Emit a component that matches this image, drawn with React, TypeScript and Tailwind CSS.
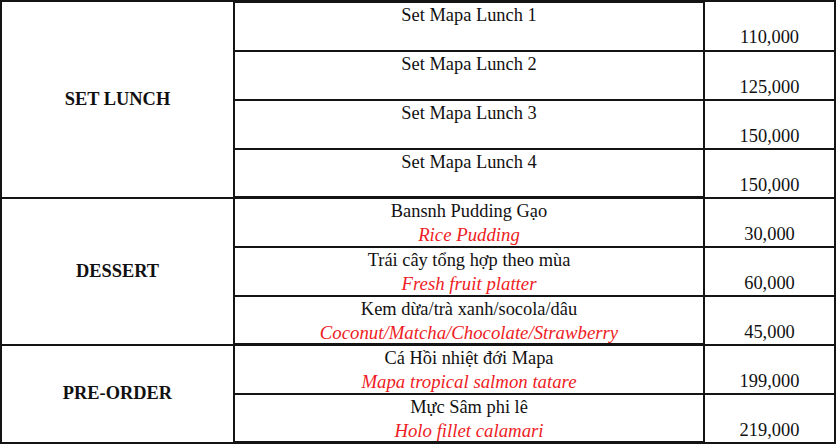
type Item = {
  name: string;
  en?: string;
  price: string;
};

type Section = {
  title: string;
  items: Item[];
};

const sections: Section[] = [
  {
    title: 'SET LUNCH',
    items: [
      { name: 'Set Mapa Lunch 1', price: '110,000' },
      { name: 'Set Mapa Lunch 2', price: '125,000' },
      { name: 'Set Mapa Lunch 3', price: '150,000' },
      { name: 'Set Mapa Lunch 4', price: '150,000' },
    ],
  },
  {
    title: 'DESSERT',
    items: [
      { name: 'Bansnh Pudding Gạo', en: 'Rice Pudding', price: '30,000' },
      { name: 'Trái cây tổng hợp theo mùa', en: 'Fresh fruit platter', price: '60,000' },
      {
        name: 'Kem dừa/trà xanh/socola/dâu',
        en: 'Coconut/Matcha/Chocolate/Strawberry',
        price: '45,000',
      },
    ],
  },
  {
    title: 'PRE-ORDER',
    items: [
      { name: 'Cá Hồi nhiệt đới Mapa', en: 'Mapa tropical salmon tatare', price: '199,000' },
      { name: 'Mực Sâm phi lê', en: 'Holo fillet calamari', price: '219,000' },
    ],
  },
];

const MenuRow = ({ item, first, last }: { item: Item; first: boolean; last: boolean }) => {
  return (
    <div className={`flex ${first ? 'h-[52px]' : 'h-[49px]'}`}>
      <div
        className={`flex-1 border-[#141414] text-center ${first ? 'border-t-[3px]' : ''} ${
          last ? 'border-b-[3px]' : 'border-b-2'
        } pt-[1px]`}
      >
        <div className="leading-[23px] text-[#111]">{item.name}</div>
        <div className="leading-[23px] italic text-[18.8px] text-[#ee1c25]">{item.en ?? '\u00a0'}</div>
      </div>
      <div
        className={`w-[133px] border-l-2 border-r-2 border-b-2 border-[#141414] text-center pt-[1px] ${
          first ? 'border-t-2' : ''
        }`}
      >
        <div className="leading-[23px]">&nbsp;</div>
        <div className="leading-[23px] text-[#111]">{item.price}</div>
      </div>
    </div>
  );
};

export default function App() {
  return (
    <div className="w-[836px] h-[445px] bg-white overflow-hidden font-['Liberation_Serif','Times_New_Roman',serif] text-[18.4px]">
      {sections.map((section, si) => (
        <div key={section.title} className="flex">
          <div
            className={`w-[235px] flex items-center justify-center border-l-2 border-r-2 border-b-2 border-[#141414] font-bold text-[#111] ${
              si === 0 ? 'border-t-2' : ''
            }`}
          >
            {section.title}
          </div>
          <div className="flex-1 flex flex-col">
            {section.items.map((item, i) => (
              <MenuRow
                key={item.name}
                item={item}
                first={si === 0 && i === 0}
                last={i === section.items.length - 1}
              />
            ))}
          </div>
        </div>
      ))}
    </div>
  );
}
